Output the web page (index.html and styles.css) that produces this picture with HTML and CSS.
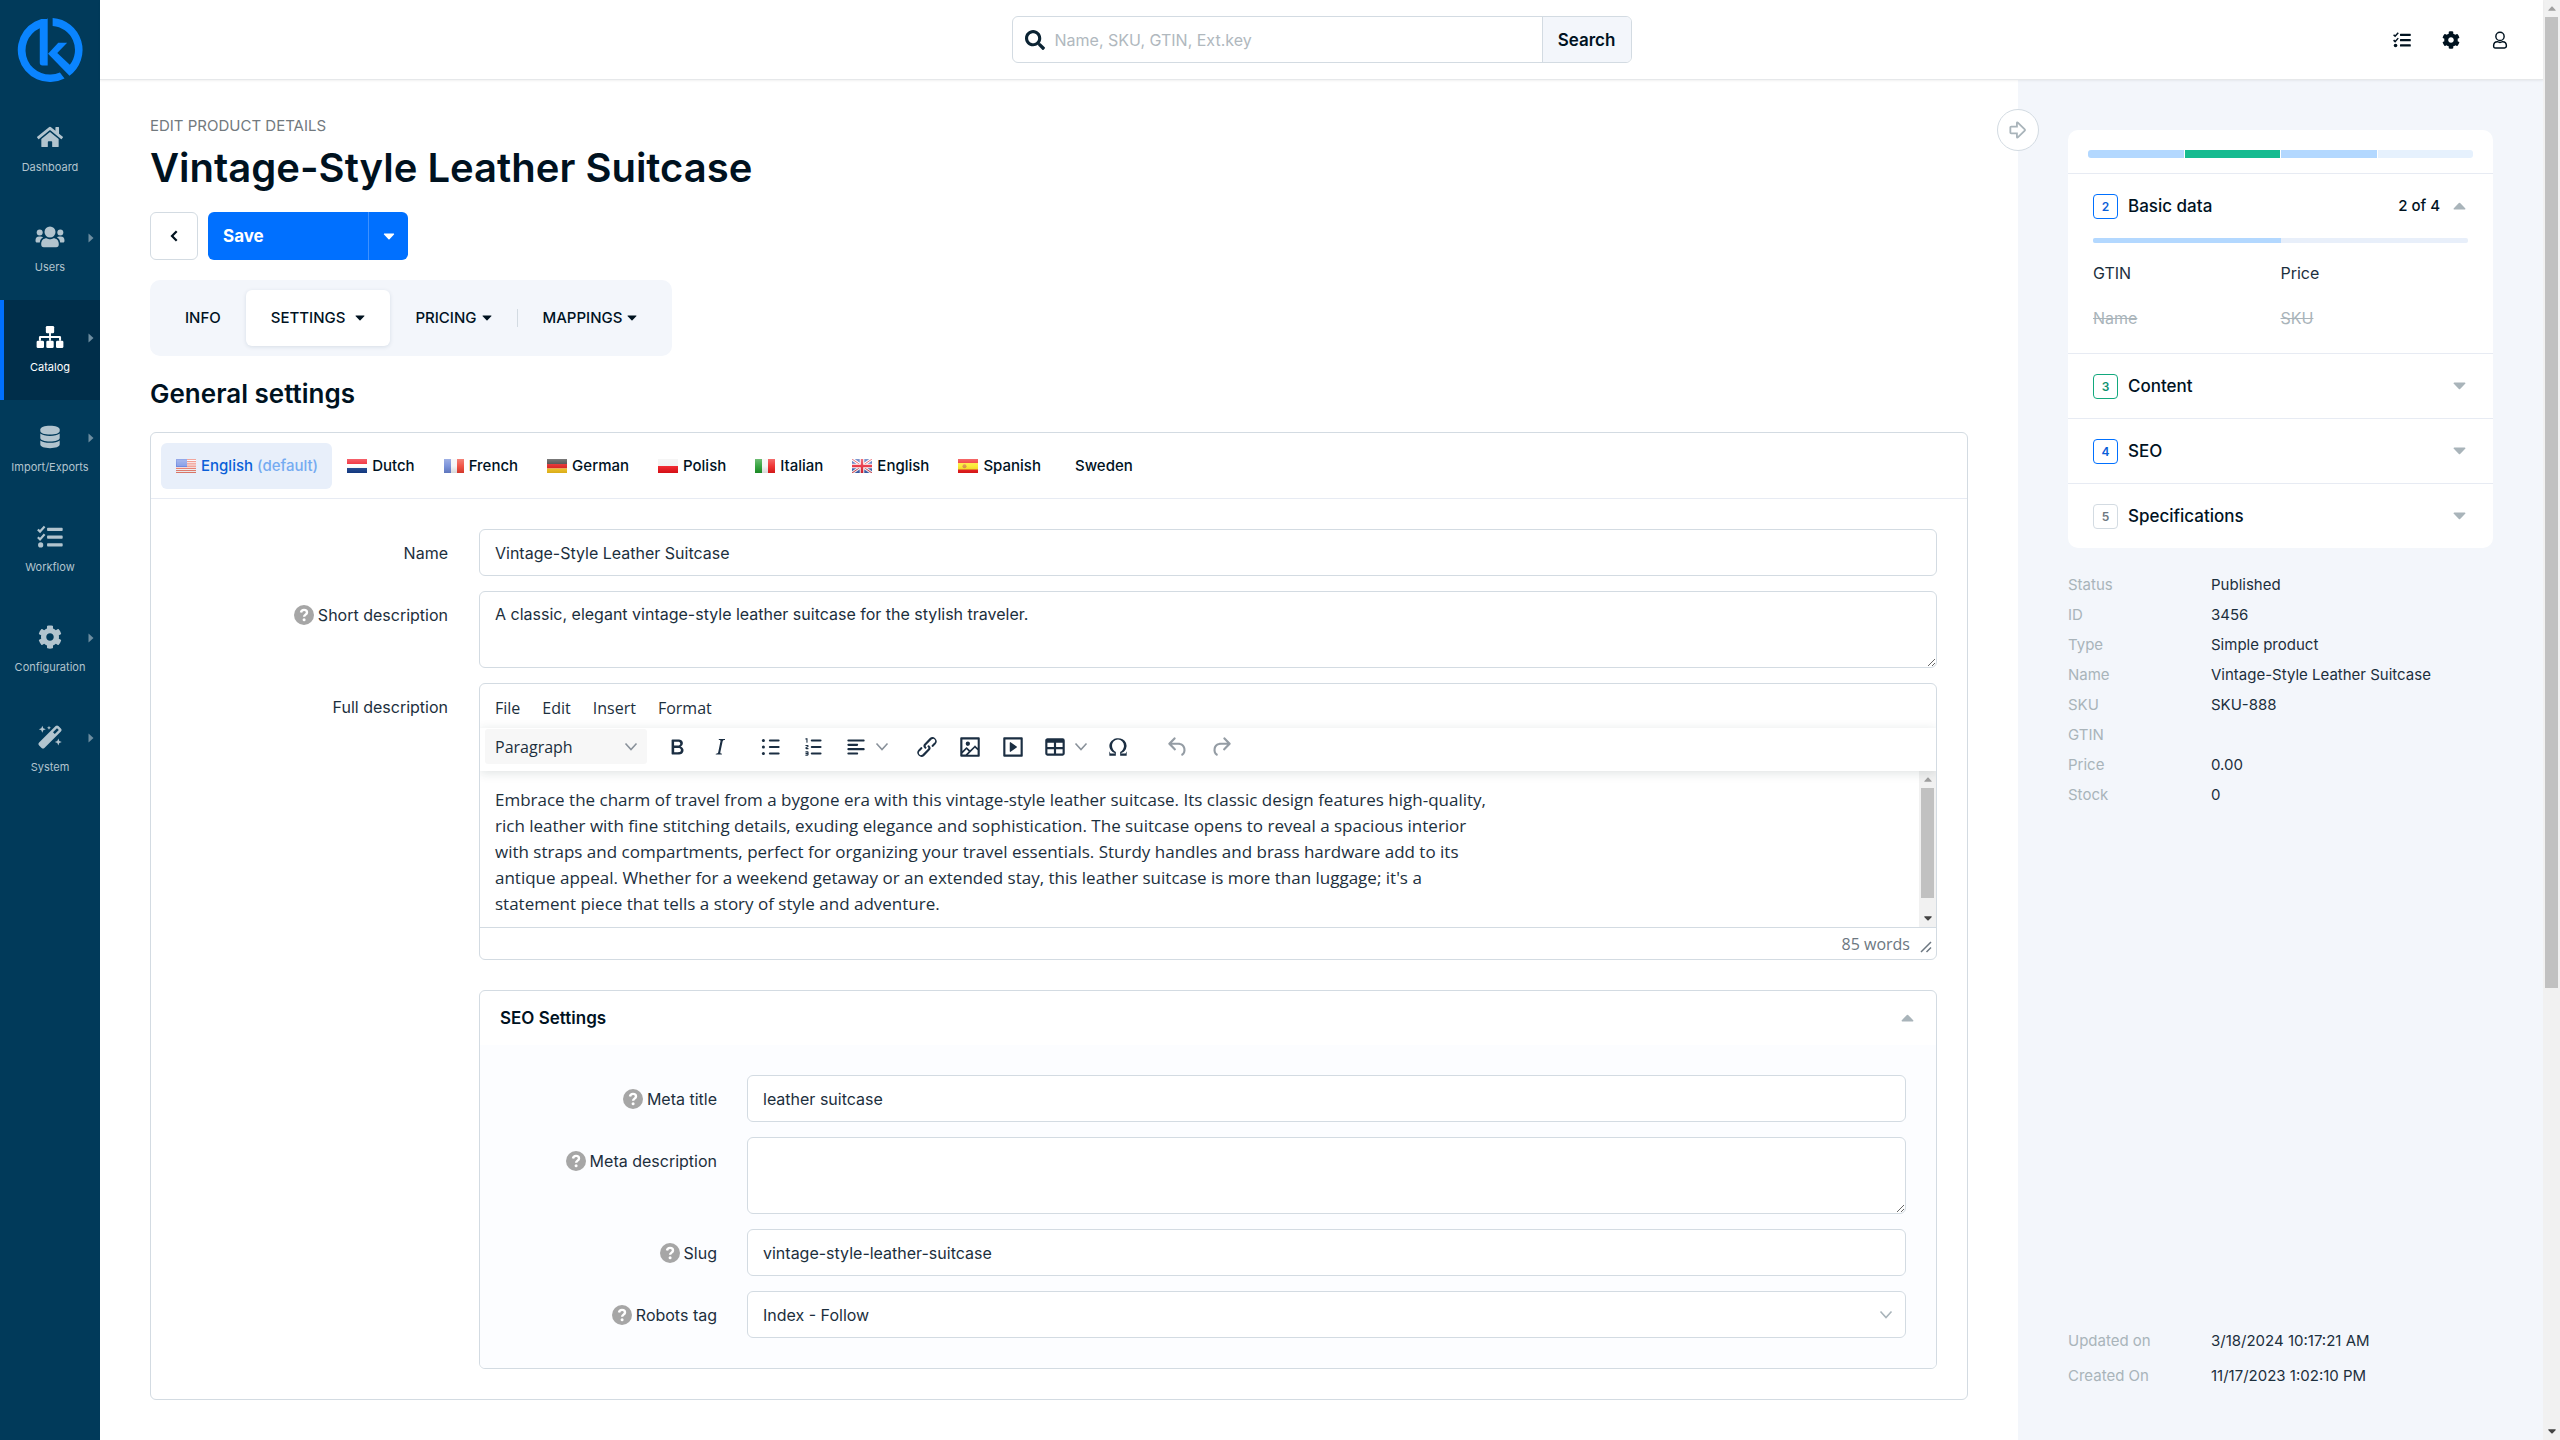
FILE: index.html
```html
<!DOCTYPE html>
<html lang="en">
<head>
<meta charset="utf-8">
<title>Edit product details</title>
<meta name="viewport" content="width=device-width, initial-scale=1">
<link rel="stylesheet" href="styles.css">
</head>
<body>
<svg class="defs" aria-hidden="true">
  <defs>
    <symbol id="i-home" viewBox="0 0 576 512"><path d="M280.37 148.26L96 300.11V464a16 16 0 0 0 16 16l112.06-.29a16 16 0 0 0 15.92-16V368a16 16 0 0 1 16-16h64a16 16 0 0 1 16 16v95.64a16 16 0 0 0 16 16.05L464 480a16 16 0 0 0 16-16V300L295.67 148.26a12.19 12.19 0 0 0-15.3 0zM571.6 251.47L488 182.56V44.05a12 12 0 0 0-12-12h-56a12 12 0 0 0-12 12v72.61L318.47 43a48 48 0 0 0-61 0L4.34 251.47a12 12 0 0 0-1.6 16.9l25.5 31A12 12 0 0 0 45.15 301l235.22-193.74a12.19 12.19 0 0 1 15.3 0L530.9 301a12 12 0 0 0 16.9-1.6l25.5-31a12 12 0 0 0-1.7-16.93z"/></symbol>
    <symbol id="i-users" viewBox="0 0 30 24"><circle cx="15" cy="7" r="5.5"/><circle cx="4.7" cy="7.4" r="3"/><circle cx="25.3" cy="7.4" r="3"/><path d="M6.2 19.2c0-4 2.4-6 5.4-6 1.400.7 2.200 1 3.400 1s2-.3 3.400-1c3 0 5.400 2 5.400 6 0 2-.8 3-2.600 3H8.800c-1.800 0-2.600-1-2.600-3z"/><path d="M.5 15.500c0-2.600 1.300-4 3.600-4h1.500c1 0 1.900.3 2.500.8-1.900 1-3 2.700-3.300 5.200H2c-1 0-1.500-.6-1.500-2zM29.500 15.500c0-2.600-1.300-4-3.600-4h-1.500c-1 0-1.900.3-2.500.8 1.900 1 3 2.700 3.300 5.200H28c1 0 1.500-.6 1.500-2z"/></symbol>
    <symbol id="i-sitemap" viewBox="0 0 30 26"><rect x="10.500" y="1" width="9" height="8" rx="1.500"/><rect x="0.500" y="17" width="8" height="8" rx="1.500"/><rect x="11" y="17" width="8" height="8" rx="1.500"/><rect x="21.500" y="17" width="8" height="8" rx="1.500"/><path d="M14 8h2v4h9.500c.9 0 1.500.6 1.500 1.500V17h-2.200v-3H16v3h-2v-3H5.200v3H3v-3.500c0-.9.6-1.500 1.500-1.500H14z"/></symbol>
    <symbol id="i-db" viewBox="0 0 22 26"><path d="M.5 5c0-2.600 4.500-4.200 10.500-4.200S21.500 2.400 21.500 5v1.500c0 2.400-4.500 3.900-10.500 3.900S.5 8.900.5 6.500z"/><path d="M.5 9.300c2 1.700 6 2.500 10.500 2.500s8.500-.8 10.500-2.500V14c0 2.300-4.500 3.800-10.500 3.800S.5 16.300.5 14z"/><path d="M.5 16.800c2 1.700 6 2.500 10.500 2.500s8.500-.8 10.500-2.500v4.400c0 2.400-4.500 3.900-10.500 3.900S.5 23.600.5 21.200z"/></symbol>
    <symbol id="i-tasks" viewBox="0 0 24 22"><path d="M10 2.500h13a.7.7 0 0 1 .7.7v1.600a.7.7 0 0 1-.7.7H10a.7.7 0 0 1-.7-.7V3.200a.7.7 0 0 1 .7-.7zM10 9.700h13a.7.7 0 0 1 .7.7V12a.7.7 0 0 1-.7.7H10a.7.7 0 0 1-.7-.7v-1.600a.7.7 0 0 1 .7-.7zM10 16.800h13a.7.7 0 0 1 .7.7v1.600a.7.7 0 0 1-.7.700H10a.7.7 0 0 1-.7-.7v-1.600a.7.7 0 0 1 .7-.7z"/><circle cx="3.400" cy="18.300" r="2.400"/><path d="M.8 4l2 2L7 1.300M.8 11.200l2 2L7 8.500" fill="none" stroke="currentColor" stroke-width="2"/></symbol>
    <symbol id="i-cog" viewBox="0 0 512 512"><path d="M487.400 315.700l-42.600-24.600c4.300-23.200 4.300-47 0-70.200l42.600-24.600c4.900-2.800 7.100-8.600 5.500-14-11.100-35.600-30-67.800-54.700-94.600-3.800-4.100-10-5.100-14.800-2.300L380.800 110c-17.900-15.400-38.500-27.300-60.800-35.100V25.800c0-5.600-3.900-10.500-9.400-11.700-36.700-8.200-74.300-7.800-109.200 0-5.500 1.200-9.400 6.100-9.400 11.700V75c-22.200 7.900-42.800 19.800-60.800 35.100L88.700 85.500c-4.900-2.800-11-1.900-14.800 2.300-24.700 26.700-43.600 58.900-54.700 94.600-1.700 5.400.6 11.200 5.500 14L67.300 221c-4.300 23.200-4.300 47 0 70.200l-42.600 24.600c-4.900 2.800-7.100 8.600-5.500 14 11.100 35.600 30 67.800 54.700 94.600 3.800 4.100 10 5.100 14.800 2.300l42.600-24.600c17.900 15.400 38.500 27.300 60.800 35.100v49.200c0 5.600 3.900 10.500 9.400 11.700 36.700 8.200 74.300 7.800 109.200 0 5.500-1.200 9.400-6.100 9.400-11.700v-49.200c22.200-7.900 42.800-19.800 60.800-35.100l42.600 24.600c4.900 2.800 11 1.900 14.800-2.300 24.700-26.700 43.600-58.900 54.700-94.600 1.500-5.500-.7-11.300-5.600-14.100zM256 336c-44.100 0-80-35.900-80-80s35.900-80 80-80 80 35.900 80 80-35.900 80-80 80z"/></symbol>
    <symbol id="i-wand" viewBox="0 0 24 24"><path fill-rule="evenodd" d="M17.600 1.100a2 2 0 0 1 2.800 0l2.500 2.500a2 2 0 0 1 0 2.800L6.400 22.900a2 2 0 0 1-2.800 0L1.100 20.400a2 2 0 0 1 0-2.800zM19 3.200l-4 4L16.800 9l4-4z"/><path d="M4.300.8l1 2.500 2.500 1-2.500 1-1 2.500-1-2.500-2.500-1 2.500-1zM20.300 13.500l1 2.500 2.500 1-2.500 1-1 2.500-1-2.500-2.500-1 2.500-1zM11 .8l.6 1.400 1.400.6-1.400.6-.6 1.400-.6-1.400L9 2.800l1.400-.6z"/></symbol>
    <symbol id="i-search" viewBox="0 0 512 512"><path d="M505 442.700L405.300 343c-4.500-4.500-10.600-7-17-7H372c27.600-35.300 44-79.700 44-128C416 93.100 322.900 0 208 0S0 93.100 0 208s93.100 208 208 208c48.300 0 92.700-16.400 128-44v16.300c0 6.400 2.500 12.500 7 17l99.700 99.700c9.400 9.400 24.600 9.400 33.900 0l28.300-28.300c9.400-9.400 9.400-24.600.1-34zM208 336c-70.700 0-128-57.200-128-128 0-70.700 57.200-128 128-128 70.700 0 128 57.200 128 128 0 70.700-57.200 128-128 128z"/></symbol>
    <symbol id="i-user" viewBox="0 0 16 20"><g fill="none" stroke="currentColor" stroke-width="1.600"><circle cx="8" cy="6" r="4.600"/><path d="M.9 16.500c0-3 1.600-4.600 4.200-4.600.9.500 1.900.8 2.900.8s2-.3 2.900-.8c2.600 0 4.200 1.600 4.200 4.600 0 1.600-.6 2.300-2 2.300H2.900c-1.400 0-2-.7-2-2.300z"/></g></symbol>
    <symbol id="i-help" viewBox="0 0 20 20"><circle cx="10" cy="10" r="10"/><path d="M7 7.500C7.300 5.600 8.500 4.900 10 4.900c1.800 0 3 1 3 2.500 0 2.200-2.900 2.200-2.900 4.300" fill="none" stroke="#fff" stroke-width="2.400"/><circle cx="10.100" cy="14.700" r="1.500" fill="#fff"/></symbol>
    <symbol id="i-down" viewBox="0 0 12 8"><path d="M.8.500h10.400c.7 0 1 .8.500 1.300L6.600 7.100a.9.900 0 0 1-1.200 0L.3 1.800C-.2 1.300.1.500.8.500z"/></symbol>
    <symbol id="i-up" viewBox="0 0 12 8"><path d="M.8 7.500h10.400c.7 0 1-.8.500-1.300L6.600.9a.9.900 0 0 0-1.200 0L.3 6.200c-.5.500-.2 1.300.5 1.300z"/></symbol>
    <symbol id="i-right" viewBox="0 0 6 10"><path d="M.5.500v9L5.500 5z"/></symbol>
    <symbol id="i-chev" viewBox="0 0 14 10"><path d="M1.500 1.500L7 7.500l5.500-6" fill="none" stroke="currentColor" stroke-width="1.600"/></symbol>
    <symbol id="i-back" viewBox="0 0 8 12"><path d="M6.700 1.200L2 6l4.700 4.800" fill="none" stroke="currentColor" stroke-width="2.200"/></symbol>
    <symbol id="i-arrow" viewBox="0 0 20 20"><path d="M2.500 6.300h6.300V2.200c0-.7.600-.9 1-.5l7.700 7.600a1 1 0 0 1 0 1.400l-7.700 7.600c-.4.400-1 .200-1-.5v-4.100H2.500a1 1 0 0 1-1-1V7.300a1 1 0 0 1 1-1z" fill="none" stroke="currentColor" stroke-width="2"/></symbol>

    <symbol id="t-bold" viewBox="0 0 24 24"><path d="M7.800 19c-.3 0-.5 0-.6-.2l-.2-.5V5.700c0-.2 0-.4.2-.5l.6-.2h5c1.500 0 2.700.3 3.500 1 .7.6 1.100 1.400 1.100 2.500a3 3 0 0 1-.6 1.900c-.4.600-1 1-1.600 1.200.4.100.9.300 1.300.6s.8.700 1 1.200c.4.400.5 1 .5 1.600 0 1.300-.4 2.300-1.300 3-.8.700-2.100 1-3.800 1H7.800Zm5-8.300c.6 0 1.200-.1 1.600-.5.400-.3.600-.7.600-1.300 0-1.100-.8-1.700-2.300-1.700H9.300v3.500h3.400Zm.5 6c.7 0 1.300-.1 1.700-.4.400-.4.600-.9.600-1.500s-.2-1-.7-1.400c-.4-.3-1-.4-2-.4H9.400v3.800h4Z"/></symbol>
    <symbol id="t-italic" viewBox="0 0 24 24"><path d="m16.700 4.700-.1.900h-.3c-.6 0-1 0-1.400.3-.3.300-.4.600-.5 1.100l-2.100 9.800v.6c0 .5.400.8 1.400.8h.2l-.2.800H8l.2-.8h.2c1.100 0 1.800-.5 2-1.500l2-9.800.1-.5c0-.6-.4-.8-1.400-.8h-.3l.2-.9h5.800Z"/></symbol>
    <symbol id="t-ul" viewBox="0 0 24 24"><path d="M11 5h8a1 1 0 0 1 0 2h-8a1 1 0 0 1 0-2Zm0 6h8a1 1 0 0 1 0 2h-8a1 1 0 0 1 0-2Zm0 6h8a1 1 0 0 1 0 2h-8a1 1 0 0 1 0-2Z"/><circle cx="5" cy="6" r="1.400"/><circle cx="5" cy="12" r="1.400"/><circle cx="5" cy="18" r="1.400"/></symbol>
    <symbol id="t-ol" viewBox="0 0 24 24"><path d="M10 17h8a1 1 0 0 1 0 2h-8a1 1 0 0 1 0-2Zm0-6h8a1 1 0 0 1 0 2h-8a1 1 0 0 1 0-2Zm0-6h8a1 1 0 1 1 0 2h-8a1 1 0 1 1 0-2ZM6 4v3.500c0 .3-.2.500-.5.500a.5.500 0 0 1-.5-.5V5h-.5a.5.500 0 0 1 0-1H6Zm-1 8.800.2.200h1.300c.3 0 .5.200.5.500s-.2.500-.5.500H4.900a1 1 0 0 1-.9-1V13c0-.4.300-.8.600-1l1.200-.4.200-.3a.2.200 0 0 0-.2-.2H4.500a.5.500 0 0 1-.5-.5c0-.3.200-.5.500-.5h1.600c.5 0 .9.400.9 1v.1c0 .4-.3.800-.6 1l-1.200.4-.2.300ZM7 17v2c0 .6-.4 1-1 1H4.500a.5.500 0 0 1 0-1h1.200c.2 0 .3-.1.300-.3 0-.2-.1-.3-.3-.3H4.400a.4.400 0 1 1 0-.8h1.300c.2 0 .3-.1.300-.3 0-.2-.1-.3-.3-.3H4.500a.5.500 0 1 1 0-1H6c.6 0 1 .4 1 1Z"/></symbol>
    <symbol id="t-align" viewBox="0 0 24 24"><path d="M5 5h14c.6 0 1 .4 1 1s-.4 1-1 1H5a1 1 0 1 1 0-2Zm0 4h8c.6 0 1 .4 1 1s-.4 1-1 1H5a1 1 0 1 1 0-2Zm0 8h8c.6 0 1 .4 1 1s-.4 1-1 1H5a1 1 0 0 1 0-2Zm0-4h14c.6 0 1 .4 1 1s-.4 1-1 1H5a1 1 0 0 1 0-2Z"/></symbol>
    <symbol id="t-link" viewBox="0 0 24 24"><path d="M6.200 12.300a1 1 0 0 1 1.400 1.400l-2 2a2 2 0 1 0 2.600 2.800l4.800-4.800a1 1 0 0 0 0-1.400 1 1 0 1 1 1.400-1.300 2.900 2.900 0 0 1 0 4L9.600 20a3.900 3.900 0 0 1-5.500-5.500l2-2Zm11.600-.6a1 1 0 0 1-1.400-1.400l2-2a2 2 0 1 0-2.600-2.800L11 10.300a1 1 0 0 0 0 1.400A1 1 0 1 1 9.600 13a2.900 2.900 0 0 1 0-4L14.400 4a3.900 3.900 0 0 1 5.500 5.500l-2 2Z"/></symbol>
    <symbol id="t-image" viewBox="0 0 24 24"><path d="m5 15.700 3.300-3.200c.3-.3.700-.3 1 0L12 15l4.100-4c.3-.4.800-.4 1 0l2 1.900V5H5v10.700ZM5 18V19h3l2.800-2.900-2-2L5 17.900Zm14-3-2.500-2.400-6.400 6.500H19v-4ZM4 3h16c.6 0 1 .4 1 1v16c0 .6-.4 1-1 1H4a1 1 0 0 1-1-1V4c0-.6.4-1 1-1Zm6 8a2 2 0 1 0 0-4 2 2 0 0 0 0 4Z"/></symbol>
    <symbol id="t-media" viewBox="0 0 24 24"><path d="M4 3h16c.6 0 1 .4 1 1v16c0 .6-.4 1-1 1H4a1 1 0 0 1-1-1V4c0-.6.4-1 1-1Zm1 2v14h14V5H5Zm4.800 2.600 5.600 4a.5.500 0 0 1 0 .8l-5.600 4A.5.500 0 0 1 9 16V8a.5.500 0 0 1 .8-.4Z"/></symbol>
    <symbol id="t-table" viewBox="0 0 24 24"><path d="M19 4a2 2 0 0 1 2 2v12a2 2 0 0 1-2 2H5a2 2 0 0 1-2-2V6c0-1.100.9-2 2-2h14ZM5 14v4h6v-4H5Zm14 0h-6v4h6v-4Zm0-6h-6v4h6V8ZM5 12h6V8H5v4Z"/></symbol>
    <symbol id="t-omega" viewBox="0 0 24 24"><path d="M15 18h4l1-2v4h-6v-3.300l1.400-1a6 6 0 0 0 1.800-2.900 6.300 6.300 0 0 0-.1-4.100 5.800 5.800 0 0 0-3-3.200c-.6-.3-1.300-.5-2.100-.5a5.100 5.100 0 0 0-3.900 1.800 6.300 6.300 0 0 0-1.300 6 6.200 6.200 0 0 0 1.800 3l1.400.9V20H4v-4l1 2h4v-.5l-2-1L5.400 15A6.500 6.500 0 0 1 4 11c0-1 .2-1.900.6-2.700A7 7 0 0 1 7.800 5C9 4.300 10.500 4 12 4c1.600 0 3 .3 4.200.9a7 7 0 0 1 3.200 3.400 6.700 6.700 0 0 1-.1 5.500c-.3.700-.8 1.200-1.300 1.800l-1 .9-2 1v.5Z"/></symbol>
    <symbol id="t-undo" viewBox="0 0 24 24"><path d="M6.400 8H12c3.700 0 6.200 2 6.800 5.100.6 2.700-.4 5.600-2.300 6.800a1 1 0 0 1-1-1.800c1.100-.6 1.800-2.700 1.400-4.600-.5-2.100-2.100-3.500-4.900-3.500H6.400l3.300 3.300a1 1 0 1 1-1.400 1.400l-5-5a1 1 0 0 1 0-1.400l5-5a1 1 0 0 1 1.400 1.400L6.400 8Z"/></symbol>
    <symbol id="t-redo" viewBox="0 0 24 24"><path transform="matrix(-1 0 0 1 24 0)" d="M6.400 8H12c3.700 0 6.200 2 6.800 5.100.6 2.700-.4 5.600-2.300 6.800a1 1 0 0 1-1-1.800c1.100-.6 1.800-2.700 1.400-4.600-.5-2.100-2.100-3.500-4.900-3.500H6.400l3.300 3.300a1 1 0 1 1-1.400 1.400l-5-5a1 1 0 0 1 0-1.400l5-5a1 1 0 0 1 1.400 1.400L6.400 8Z"/></symbol>
    <symbol id="t-grip" viewBox="0 0 12 12"><path d="M1 11L11 1M6.500 11L11 6.500" fill="none" stroke="currentColor" stroke-width="1.500"/></symbol>

    <linearGradient id="gloss" x1="0" y1="0" x2="0" y2="1"><stop offset="0" stop-color="#fff" stop-opacity=".35"/><stop offset=".5" stop-color="#fff" stop-opacity=".12"/><stop offset="1" stop-color="#000" stop-opacity=".12"/></linearGradient>
    <symbol id="f-us" viewBox="0 0 20 14"><path fill="#fff" d="M0 0h20v14H0z"/><path d="M0 .5h20M0 2.700h20M0 4.900h20M0 7.100h20M0 9.300h20M0 11.500h20M0 13.500h20" stroke="#f0604a" stroke-width="1.200"/><path fill="#3f63d8" d="M0 0h11v8H0z"/><path d="M1.500 2h9M1.500 4h9M1.500 6h9" stroke="#c9d6fa" stroke-width="1" stroke-dasharray="1 1"/></symbol>
    <symbol id="f-nl" viewBox="0 0 20 14"><path fill="#f00d1c" d="M0 0h20v5H0z"/><path fill="#fff" d="M0 5h20v4H0z"/><path fill="#143f8f" d="M0 9h20v5H0z"/></symbol>
    <symbol id="f-fr" viewBox="0 0 20 14"><path fill="#6b86d6" d="M0 0h7v14H0z"/><path fill="#f4f4f6" d="M7 0h6v14H7z"/><path fill="#ef3f30" d="M13 0h7v14h-7z"/></symbol>
    <symbol id="f-de" viewBox="0 0 20 14"><path fill="#333" d="M0 0h20v5H0z"/><path fill="#dd1414" d="M0 5h20v4.500H0z"/><path fill="#f7c41c" d="M0 9.500h20V14H0z"/></symbol>
    <symbol id="f-pl" viewBox="0 0 20 14"><path fill="#f0f0f0" d="M0 0h20v7H0z"/><path fill="#f01018" d="M0 7h20v7H0z"/></symbol>
    <symbol id="f-it" viewBox="0 0 20 14"><path fill="#1f9a2a" d="M0 0h7v14H0z"/><path fill="#f4f4f4" d="M7 0h6v14H7z"/><path fill="#ee1c1c" d="M13 0h7v14h-7z"/></symbol>
    <symbol id="f-gb" viewBox="0 0 20 14"><path fill="#3f62b5" d="M0 0h20v14H0z"/><path d="M0 0l20 14M20 0L0 14" stroke="#fff" stroke-width="3"/><path d="M0 0l20 14M20 0L0 14" stroke="#e03a4a" stroke-width="1"/><path d="M10 0v14M0 7h20" stroke="#fff" stroke-width="4.600"/><path d="M10 0v14M0 7h20" stroke="#e62436" stroke-width="2.400"/></symbol>
    <symbol id="f-es" viewBox="0 0 20 14"><path fill="#f01818" d="M0 0h20v14H0z"/><path fill="#fbe81e" d="M0 4h20v6.500H0z"/><circle cx="6.500" cy="7.300" r="2" fill="#d98a3a"/></symbol>
  </defs>
</svg>

<div class="app">
  <nav class="sidebar" aria-label="Main">
    <a class="logo" href="#" aria-label="Home"><svg viewBox="0 0 200 200"><path d="M146 54A97 97 0 1 0 195 237L181 219A73 73 0 0 1 120 85V190q0 8 8 8h16V54z" transform="translate(-51 -51)"/><path d="M159 54A97 97 0 0 1 210 229L145 162 176 129H203L173 160 211 196A73 73 0 0 0 159 78z" transform="translate(-51 -51)"/></svg></a>
    <a class="nav" href="#"><svg class="ni"><use href="#i-home"/></svg><span>Dashboard</span></a>
    <a class="nav sub" href="#"><svg class="ni wide"><use href="#i-users"/></svg><span>Users</span><svg class="more"><use href="#i-right"/></svg></a>
    <a class="nav sub active" href="#"><svg class="ni wide"><use href="#i-sitemap"/></svg><span>Catalog</span><svg class="more"><use href="#i-right"/></svg></a>
    <a class="nav sub" href="#"><svg class="ni"><use href="#i-db"/></svg><span>Import/Exports</span><svg class="more"><use href="#i-right"/></svg></a>
    <a class="nav" href="#"><svg class="ni"><use href="#i-tasks"/></svg><span>Workflow</span></a>
    <a class="nav sub" href="#"><svg class="ni"><use href="#i-cog"/></svg><span>Configuration</span><svg class="more"><use href="#i-right"/></svg></a>
    <a class="nav sub" href="#"><svg class="ni"><use href="#i-wand"/></svg><span>System</span><svg class="more"><use href="#i-right"/></svg></a>
  </nav>

  <div class="page">
    <header class="topbar">
      <form class="search" role="search">
        <svg class="search-icon"><use href="#i-search"/></svg>
        <input type="text" aria-label="Search" placeholder="Name, SKU, GTIN, Ext.key">
        <button type="button">Search</button>
      </form>
      <div class="tools">
        <button type="button" aria-label="Tasks"><svg><use href="#i-tasks"/></svg></button>
        <button type="button" aria-label="Settings"><svg><use href="#i-cog"/></svg></button>
        <button type="button" aria-label="Account"><svg><use href="#i-user"/></svg></button>
      </div>
    </header>

    <div class="columns">
      <main class="content">
        <p class="eyebrow">EDIT PRODUCT DETAILS</p>
        <h1>Vintage-Style Leather Suitcase</h1>
        <div class="actions">
          <button class="back" type="button" aria-label="Back"><svg><use href="#i-back"/></svg></button>
          <div class="save">
            <button class="save-main" type="button">Save</button>
            <button class="save-more" type="button" aria-label="More save options"><svg class="caret"><use href="#i-down"/></svg></button>
          </div>
        </div>
        <nav class="tabs" aria-label="Sections">
          <a href="#">INFO</a>
          <a class="on" href="#">SETTINGS <svg class="caret"><use href="#i-down"/></svg></a>
          <a href="#">PRICING <svg class="caret"><use href="#i-down"/></svg></a>
          <span class="sep"></span>
          <a href="#">MAPPINGS <svg class="caret"><use href="#i-down"/></svg></a>
        </nav>
        <h2>General settings</h2>

        <section class="card">
          <div class="langs">
            <button class="on" type="button"><svg><use href="#f-us"/><rect width="20" height="14" fill="url(#gloss)"/></svg><span>English <i>(default)</i></span></button>
            <button type="button"><svg><use href="#f-nl"/><rect width="20" height="14" fill="url(#gloss)"/></svg>Dutch</button>
            <button type="button"><svg><use href="#f-fr"/><rect width="20" height="14" fill="url(#gloss)"/></svg>French</button>
            <button type="button"><svg><use href="#f-de"/><rect width="20" height="14" fill="url(#gloss)"/></svg>German</button>
            <button type="button"><svg><use href="#f-pl"/><rect width="20" height="14" fill="url(#gloss)"/></svg>Polish</button>
            <button type="button"><svg><use href="#f-it"/><rect width="20" height="14" fill="url(#gloss)"/></svg>Italian</button>
            <button type="button"><svg><use href="#f-gb"/><rect width="20" height="14" fill="url(#gloss)"/></svg>English</button>
            <button type="button"><svg><use href="#f-es"/><rect width="20" height="14" fill="url(#gloss)"/></svg>Spanish</button>
            <button class="plain" type="button">Sweden</button>
          </div>

          <div class="form">
            <label for="name">Name</label>
            <input class="field" id="name" type="text" value="Vintage-Style Leather Suitcase">

            <label for="short"><svg class="help"><use href="#i-help"/></svg>Short description</label>
            <textarea class="field" id="short">A classic, elegant vintage-style leather suitcase for the stylish traveler.</textarea>

            <label for="full">Full description</label>
            <div class="editor">
              <div class="menubar">
                <button type="button">File</button><button type="button">Edit</button><button type="button">Insert</button><button type="button">Format</button>
              </div>
              <div class="toolbar">
                <button class="block" type="button">Paragraph<svg class="chev"><use href="#i-chev"/></svg></button>
                <div class="group">
                  <button type="button" aria-label="Bold"><svg><use href="#t-bold"/></svg></button>
                  <button type="button" aria-label="Italic"><svg><use href="#t-italic"/></svg></button>
                </div>
                <div class="group">
                  <button type="button" aria-label="Bullet list"><svg><use href="#t-ul"/></svg></button>
                  <button type="button" aria-label="Numbered list"><svg><use href="#t-ol"/></svg></button>
                  <button class="split" type="button" aria-label="Align"><svg><use href="#t-align"/></svg><svg class="chev"><use href="#i-chev"/></svg></button>
                </div>
                <div class="group">
                  <button type="button" aria-label="Link"><svg><use href="#t-link"/></svg></button>
                  <button type="button" aria-label="Image"><svg><use href="#t-image"/></svg></button>
                  <button type="button" aria-label="Media"><svg><use href="#t-media"/></svg></button>
                  <button class="split" type="button" aria-label="Table"><svg><use href="#t-table"/></svg><svg class="chev"><use href="#i-chev"/></svg></button>
                  <button type="button" aria-label="Special character"><svg><use href="#t-omega"/></svg></button>
                </div>
                <div class="group history">
                  <button type="button" aria-label="Undo"><svg><use href="#t-undo"/></svg></button>
                  <button type="button" aria-label="Redo"><svg><use href="#t-redo"/></svg></button>
                </div>
              </div>
              <div class="canvas">
                <div class="prose" id="full" role="textbox" aria-label="Full description" contenteditable="true"><p>Embrace the charm of travel from a bygone era with this vintage-style leather suitcase. Its classic design features high-quality, rich leather with fine stitching details, exuding elegance and sophistication. The suitcase opens to reveal a spacious interior with straps and compartments, perfect for organizing your travel essentials. Sturdy handles and brass hardware add to its antique appeal. Whether for a weekend getaway or an extended stay, this leather suitcase is more than luggage; it's a statement piece that tells a story of style and adventure.</p></div>
                <div class="scroll" aria-hidden="true"><svg class="dim"><use href="#i-up"/></svg><span class="thumb"></span><svg><use href="#i-down"/></svg></div>
              </div>
              <div class="status"><span>85 words</span><svg><use href="#t-grip"/></svg></div>
            </div>

            <section class="seo">
              <button class="seo-head" type="button">SEO Settings<svg class="fold"><use href="#i-up"/></svg></button>
              <div class="seo-body">
                <label for="mt"><svg class="help"><use href="#i-help"/></svg>Meta title</label>
                <input class="field" id="mt" type="text" value="leather suitcase">
                <label for="md"><svg class="help"><use href="#i-help"/></svg>Meta description</label>
                <textarea class="field" id="md"></textarea>
                <label for="slug"><svg class="help"><use href="#i-help"/></svg>Slug</label>
                <input class="field" id="slug" type="text" value="vintage-style-leather-suitcase">
                <label for="robots"><svg class="help"><use href="#i-help"/></svg>Robots tag</label>
                <div class="pick">
                  <select class="field" id="robots"><option>Index - Follow</option></select>
                  <svg class="chev"><use href="#i-chev"/></svg>
                </div>
              </div>
            </section>
          </div>
        </section>
      </main>

      <aside class="side">
        <button class="toggle" type="button" aria-label="Collapse panel"><svg><use href="#i-arrow"/></svg></button>
        <div class="steps">
          <div class="bars"><span></span><span class="done"></span><span></span><span class="todo"></span></div>
          <div class="step">
            <h3><b class="blue">2</b>Basic data<em>2 of 4</em><svg class="fold"><use href="#i-up"/></svg></h3>
            <div class="meter"><span style="width:50%"></span></div>
            <ul class="checks"><li>GTIN</li><li>Price</li><li><s>Name</s></li><li><s>SKU</s></li></ul>
          </div>
          <div class="step"><h3><b class="green">3</b>Content<svg class="fold"><use href="#i-down"/></svg></h3></div>
          <div class="step"><h3><b class="blue">4</b>SEO<svg class="fold"><use href="#i-down"/></svg></h3></div>
          <div class="step"><h3><b>5</b>Specifications<svg class="fold"><use href="#i-down"/></svg></h3></div>
        </div>
        <dl class="facts">
          <dt>Status</dt><dd>Published</dd>
          <dt>ID</dt><dd>3456</dd>
          <dt>Type</dt><dd>Simple product</dd>
          <dt>Name</dt><dd>Vintage-Style Leather Suitcase</dd>
          <dt>SKU</dt><dd>SKU-888</dd>
          <dt>GTIN</dt><dd></dd>
          <dt>Price</dt><dd>0.00</dd>
          <dt>Stock</dt><dd>0</dd>
        </dl>
        <dl class="facts dates">
          <dt>Updated on</dt><dd>3/18/2024 10:17:21 AM</dd>
          <dt>Created On</dt><dd>11/17/2023 1:02:10 PM</dd>
        </dl>
      </aside>
    </div>
  </div>

  <div class="scroll page-scroll" aria-hidden="true"><svg class="dim"><use href="#i-up"/></svg><span class="thumb"></span><svg><use href="#i-down"/></svg></div>
</div>
</body>
</html>
```

FILE: styles.css
```css
* { box-sizing: border-box; }

:root {
  --ink: #00121f;
  --text: #1c2f3d;
  --mute: #a9b4ba;
  --line: #d3dbe2;
  --soft: #e7ebf3;
  --panel: #f3f6fb;
  --blue: #0070ff;
}

body {
  margin: 0;
  font: 400 16px/24px Inter, "Liberation Sans", sans-serif;
  color: var(--text);
  background: #fff;
}

h1, h2, h3, p, ul, dl, dd { margin: 0; padding: 0; }
ul { list-style: none; }
a { color: inherit; text-decoration: none; }
button, input, textarea, select { font: inherit; color: inherit; margin: 0; }
button { border: 0; padding: 0; background: none; cursor: pointer; }
svg { display: block; flex: none; fill: currentColor; }
.defs { position: absolute; width: 0; height: 0; }

.app { display: flex; min-height: 100vh; }

/* Sidebar */
.sidebar { flex: none; width: 100px; background: #013a5a; color: #b2c4ce; }
.logo { display: block; height: 100px; padding: 17px; color: #0a84ff; }
.logo svg { width: 66px; height: 66px; }
.nav {
  position: relative;
  display: flex;
  flex-direction: column;
  align-items: center;
  gap: 10px;
  height: 100px;
  padding-top: 25px;
  font-size: 11px;
  line-height: 16px;
}
.nav.active { background: #002e4a; color: #fff; box-shadow: inset 4px 0 var(--blue); }
.ni { width: 26px; height: 24px; }
.ni.wide { width: 30px; }
.more { position: absolute; right: 6px; top: 33px; width: 6px; height: 10px; color: #6d8da0; }

/* Top bar */
.page { flex: 1; min-width: 0; display: flex; flex-direction: column; }
.topbar {
  display: grid;
  grid-template-columns: 1fr 620px 1fr;
  align-items: center;
  height: 80px;
  border-bottom: 1px solid #e6e8ea;
  box-shadow: 0 1px 2px rgba(0, 0, 0, .06);
  z-index: 1;
}
.search {
  grid-column: 2;
  display: flex;
  align-items: center;
  height: 47px;
  border: 1px solid var(--line);
  border-radius: 6px;
  overflow: hidden;
}
.search-icon { width: 20px; height: 20px; margin: 0 10px 0 12px; color: #0b2333; }
.search input { flex: 1; min-width: 0; border: 0; outline: 0; padding: 0; background: none; }
.search input::placeholder { color: #b0b8be; opacity: 1; }
.search button {
  align-self: stretch;
  width: 89px;
  border-left: 1px solid var(--line);
  background: var(--panel);
  color: var(--ink);
  font-size: 17px;
  font-weight: 600;
}
.tools { display: flex; justify-content: flex-end; gap: 31px; padding-right: 34px; color: var(--ink); }
.tools svg { width: 18px; height: 18px; }

/* Main column */
.columns { flex: 1; display: flex; }
.content { flex: 1; min-width: 0; padding: 34px 50px 40px; }
.eyebrow { font-size: 15px; color: #72797e; }
h1 { margin-top: 5px; font-size: 40px; line-height: 50px; font-weight: 600; color: var(--ink); }
h2 { margin-top: 22px; font-size: 26px; line-height: 32px; font-weight: 600; color: var(--ink); }

.actions { display: flex; gap: 10px; margin-top: 19px; }
.back {
  display: grid;
  place-items: center;
  width: 48px;
  height: 48px;
  border: 1px solid var(--line);
  border-radius: 6px;
  color: var(--ink);
}
.back svg { width: 8px; height: 12px; }
.save { display: flex; width: 200px; height: 48px; border-radius: 6px; overflow: hidden; background: var(--blue); color: #fff; }
.save-main { flex: 1; padding-left: 15px; text-align: left; font-weight: 700; font-size: 17px; }
.save-more { display: grid; place-items: center; width: 40px; border-left: 1px solid #3d91ff; }
.caret { width: 10px; height: 6px; }
.save-more .caret { width: 12px; height: 7px; }

.tabs {
  display: flex;
  align-items: center;
  width: fit-content;
  height: 76px;
  margin-top: 20px;
  padding: 10px;
  border-radius: 10px;
  background: var(--panel);
  font-size: 15px;
  font-weight: 500;
  color: var(--ink);
}
.tabs a { display: flex; align-items: center; gap: 5px; height: 56px; padding: 0 25px; }
.tabs .on { gap: 10px; border-radius: 6px; background: #fff; box-shadow: 0 1px 4px rgba(20, 50, 80, .12); }
.sep { width: 1px; height: 18px; background: var(--line); }

.card { margin-top: 22px; border: 1px solid var(--line); border-radius: 6px; }
.langs { display: flex; padding: 10px 10px 9px; border-bottom: 1px solid var(--soft); }
.langs button {
  display: flex;
  align-items: center;
  gap: 5px;
  height: 46px;
  padding: 0 14px 0 15px;
  border-radius: 6px;
  font-size: 15px;
  font-weight: 500;
  color: var(--ink);
}
.langs svg { width: 20px; height: 14px; }
.langs i { font-style: normal; color: #75abf1; }
.langs .on { background: #e8effa; color: #0a5fd8; }
.langs .on svg { opacity: .8; }
.langs .plain { padding-left: 20px; }

/* Form */
.form { display: grid; grid-template-columns: 297px minmax(0, 1fr); gap: 15px 31px; padding: 30px; padding-left: 0; }
label { display: flex; justify-content: flex-end; align-items: center; gap: 4px; height: 24px; margin-top: 12px; }
.help { width: 20px; height: 20px; color: #a6a6a6; }
.field {
  display: block;
  width: 100%;
  height: 47px;
  padding: 10px 15px;
  border: 1px solid var(--line);
  border-radius: 6px;
  background: #fff;
  outline: 0;
}
textarea.field { height: 77px; resize: vertical; }

.editor {
  border: 1px solid var(--line);
  border-radius: 6px;
  font-family: "Open Sans", "Noto Sans", sans-serif;
  overflow: hidden;
}
.menubar { display: flex; gap: 22px; padding: 12px 15px 8px; }
.toolbar { position: relative; display: flex; align-items: center; gap: 8px; height: 43px; padding: 0 5px 6px; box-shadow: 0 2px 10px rgba(30, 60, 60, .14); }
.block {
  display: flex;
  align-items: center;
  justify-content: space-between;
  width: 162px;
  height: 35px;
  padding: 0 9px 0 10px;
  border-radius: 3px;
  background: #f7f7f7;
}
.group { display: flex; }
.group button { display: flex; align-items: center; justify-content: center; width: 43px; height: 35px; color: #1b2e42; }
.group button svg { width: 26px; height: 26px; }
.group .split { width: 62px; justify-content: flex-start; gap: 6px; padding-left: 8px; }
.toolbar .chev, .group .split .chev { width: 14px; height: 10px; color: #8a929b; }
.group.history { margin-left: 9px; }
.group.history button { color: #949ca4; }
.canvas { display: flex; height: 156px; }
.prose { flex: 1; padding: 16px 15px 0; outline: 0; font-size: 17px; line-height: 26px; }
.prose p { max-width: 995px; }
.status {
  display: flex;
  justify-content: flex-end;
  align-items: center;
  gap: 10px;
  height: 32px;
  padding-right: 4px;
  border-top: 1px solid var(--line);
  color: #6c7781;
}
.status svg { width: 12px; height: 12px; margin-top: 6px; }

.scroll {
  flex: none;
  display: flex;
  flex-direction: column;
  align-items: center;
  width: 17px;
  padding: 6px 0;
  background: #f1f1f1;
  color: #444;
}
.scroll svg { width: 8px; height: 5px; }
.scroll .dim { color: #a0a0a0; }
.thumb { flex: none; width: 13px; height: 110px; margin: 6px 0 auto; background: #c1c1c1; }
.page-scroll .thumb { height: 68%; }

/* SEO panel */
.seo { grid-column: 2; margin-top: 15px; border: 1px solid var(--line); border-radius: 6px; overflow: hidden; }
.seo-head {
  display: flex;
  justify-content: space-between;
  align-items: center;
  width: 100%;
  height: 54px;
  padding: 0 22px 0 20px;
  font-size: 17px;
  font-weight: 600;
  color: var(--ink);
}
.fold { width: 13px; height: 8px; color: #a9b4ba; }
.seo-body {
  display: grid;
  grid-template-columns: 237px minmax(0, 1fr);
  gap: 15px 30px;
  padding: 30px 30px 30px 0;
  background: #fcfdff;
}
.pick { position: relative; }
.pick select { appearance: none; }
.pick .chev { position: absolute; right: 13px; top: 19px; width: 14px; height: 10px; color: #a9b4ba; }

/* Right panel */
.side { position: relative; flex: none; display: flex; flex-direction: column; width: 525px; padding: 50px 50px 47px; background: var(--panel); }
.toggle {
  position: absolute;
  left: -21px;
  top: 29px;
  display: grid;
  place-items: center;
  width: 42px;
  height: 42px;
  border: 1px solid var(--line);
  border-radius: 50%;
  background: #fff;
  color: #a9b4ba;
}
.toggle svg { width: 18px; height: 18px; }
.steps { border-radius: 10px; background: #fff; }
.bars { display: grid; grid-template-columns: repeat(4, 1fr); gap: 1px; padding: 20px 20px 15px; }
.bars span { height: 8px; background: #b3d8ff; }
.bars span:first-child { border-radius: 3px 0 0 3px; }
.bars span:last-child { border-radius: 0 3px 3px 0; }
.bars .done { background: #16bb90; }
.bars .todo { background: #e6f1fd; }
.step { padding: 0 25px; border-top: 1px solid var(--soft); }
.step h3 { display: flex; align-items: center; height: 64px; font-size: 17px; font-weight: 500; color: var(--ink); }
.step b {
  display: grid;
  place-items: center;
  width: 25px;
  height: 25px;
  margin-right: 10px;
  border: 1px solid var(--line);
  border-radius: 4px;
  font-size: 12px;
  font-weight: 600;
  color: #6c7781;
}
.step .blue { border-color: var(--blue); color: #0a5fd8; }
.step .green { border-color: #12a87d; color: #0e9270; }
.step em { margin-left: auto; font-style: normal; font-size: 15px; }
.step .fold { margin-left: auto; margin-right: 2px; }
.step em + .fold { margin-left: 13px; }
.meter { height: 5px; border-radius: 2px; overflow: hidden; background: #e8effa; }
.meter span { display: block; height: 100%; background: #b3d8ff; }
.checks { display: grid; grid-template-columns: 1fr 1fr; row-gap: 21px; padding: 18px 0 23px; }
.checks s { color: var(--mute); }

.facts { display: grid; grid-template-columns: 143px 1fr; grid-auto-rows: 30px; align-items: center; margin-top: 22px; font-size: 15px; line-height: 20px; }
.facts dt { color: var(--mute); }
.dates { grid-auto-rows: 35px; margin-top: auto; }
```
